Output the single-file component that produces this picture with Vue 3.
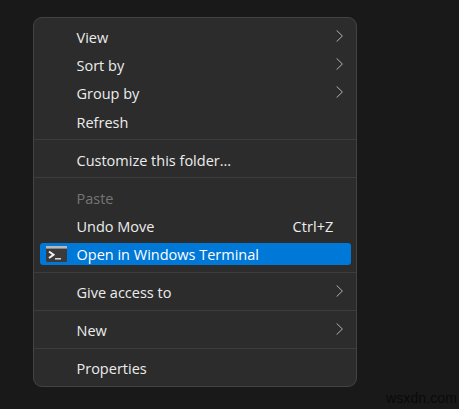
<script setup>
const sections = [
  [
    { label: 'View', arrow: true },
    { label: 'Sort by', arrow: true },
    { label: 'Group by', arrow: true },
    { label: 'Refresh' }
  ],
  [{ label: 'Customize this folder...' }],
  [
    { label: 'Paste', disabled: true },
    { label: 'Undo Move', shortcut: 'Ctrl+Z' },
    { label: 'Open in Windows Terminal', active: true, icon: true }
  ],
  [{ label: 'Give access to', arrow: true }],
  [{ label: 'New', arrow: true }],
  [{ label: 'Properties' }]
]
</script>

<template>
  <div class="page">
    <div class="menu">
      <div v-for="(section, i) in sections" :key="i" class="section">
        <div
          v-for="item in section"
          :key="item.label"
          class="row"
          :class="{ disabled: item.disabled, active: item.active }"
        >
          <div class="pill">
            <svg v-if="item.icon" class="term" viewBox="0 0 21 16" width="21" height="16">
              <rect x="0" y="0" width="21" height="16" rx="1" fill="#3b3b3b" />
              <rect x="0" y="0" width="21" height="2.6" fill="#b9b9b9" />
              <path d="M3 5.5l4.5 3.2L3 12" fill="none" stroke="#f2f2f2" stroke-width="2" />
              <path d="M9 12.8h6" stroke="#e8e8e8" stroke-width="1.4" />
            </svg>
            <span class="label">{{ item.label }}</span>
            <span v-if="item.shortcut" class="shortcut">{{ item.shortcut }}</span>
            <svg v-if="item.arrow" class="chev" viewBox="0 0 7 12" width="7" height="12">
              <path d="M0.6 0.4L6.4 6L0.6 11.6" fill="none" stroke="#b4b4b4" stroke-width="1" />
            </svg>
          </div>
        </div>
      </div>
    </div>
    <span class="mark">wsxdn.com</span>
  </div>
</template>

<style>
html, body { margin: 0; background: #191919; }
</style>

<style scoped>
.page {
  position: relative;
  width: 459px;
  height: 409px;
  overflow: hidden;
  box-sizing: border-box;
  padding: 17px 0 0 33px;
  background: #191919;
  font-family: "Open Sans", sans-serif;
}
.menu {
  width: 324px;
  box-sizing: border-box;
  background: #2c2c2c;
  border: 1px solid #434343;
  border-radius: 9px;
  padding: 5px 0 3px;
}
.section {
  padding-bottom: 2.8px;
  margin-bottom: 5.9px;
  border-bottom: 1px solid #3c3c3c;
}
.section:last-child {
  border-bottom: 0;
  margin-bottom: 0;
  padding-bottom: 0;
}
.row {
  height: 28.3px;
  padding: 0 5.5px;
  display: flex;
  align-items: center;
}
.pill {
  flex: 1;
  height: 21.5px;
  display: flex;
  align-items: center;
  padding: 0 8px 0 37px;
  border-radius: 3px;
  color: #ececec;
  font-size: 14.5px;
}
.label { flex: 1; white-space: nowrap; }
.shortcut { margin-right: 9px; letter-spacing: 0.1px; }
.chev { margin-bottom: 3px; }
.disabled .pill { color: #757575; }
.active .pill {
  background: #0078d7;
  color: #fff;
  padding-left: 6px;
  margin-bottom: 1px;
}
.active .label { margin-top: 1px; }
.term { margin-right: 10px; flex: none; }
.mark {
  position: absolute;
  left: 386px;
  top: 390px;
  font-size: 14px;
  letter-spacing: 0.1px;
  color: #0a0a0a;
  font-family: "Liberation Sans", sans-serif;
}
</style>
